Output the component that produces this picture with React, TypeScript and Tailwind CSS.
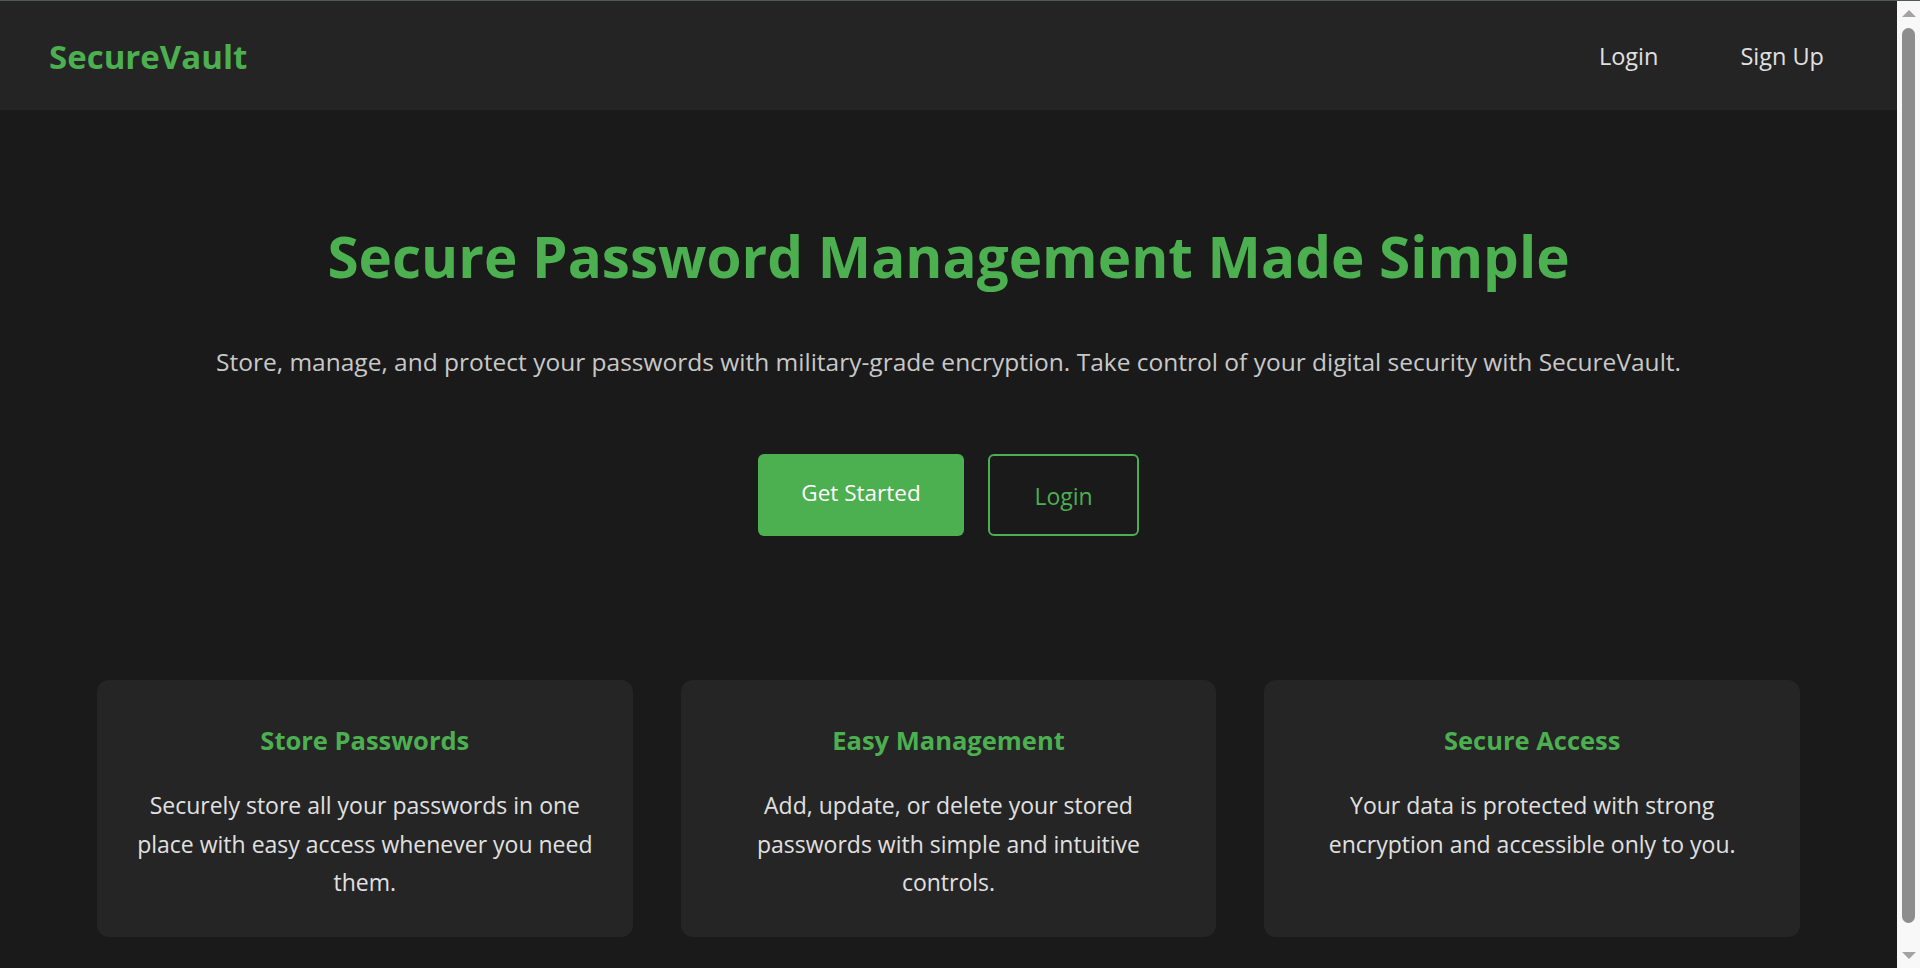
import React from "react";

const FEATURES = [
  {
    title: "Store Passwords",
    lines: ["Securely store all your passwords in one", "place with easy access whenever you need", "them."],
  },
  {
    title: "Easy Management",
    lines: ["Add, update, or delete your stored", "passwords with simple and intuitive", "controls."],
  },
  {
    title: "Secure Access",
    lines: ["Your data is protected with strong", "encryption and accessible only to you."],
  },
];

function Scrollbar() {
  return (
    <div className="flex w-[23px] shrink-0 flex-col items-center bg-[#f8f8f8]">
      <div className="mt-[9px] h-0 w-0 border-x-[7px] border-b-[7px] border-x-transparent border-b-[#a3a3a3]" />
      <div className="mt-[11px] h-[895px] w-[13px] rounded-full bg-[#8d8d8d]" />
      <div className="mt-[29px] h-0 w-0 border-x-[7px] border-t-[7px] border-x-transparent border-t-[#a3a3a3]" />
    </div>
  );
}

export default function App() {
  return (
    <div
      className="flex h-[968px] w-full overflow-hidden border-t border-[#4f5a58] bg-[#1a1a1a]"
      style={{ fontFamily: '"Open Sans", "Noto Sans", sans-serif' }}
    >
      <div className="flex min-w-0 flex-1 flex-col">
        {/* Navbar */}
        <nav className="flex h-[109px] shrink-0 items-center justify-between bg-[#242424] pl-[49px] pr-[73px] pt-[2px]">
          <span className="text-[33px] font-bold leading-none text-[#4caf50]">SecureVault</span>
          <div className="flex items-center gap-[82px] text-[23.5px] text-[#e0e0e0]">
            <a href="#">Login</a>
            <a href="#">Sign Up</a>
          </div>
        </nav>

        {/* Hero */}
        <section className="flex flex-col items-center pt-[113px] text-center">
          <h1 className="text-[56.6px] font-bold leading-[1.2] text-[#4caf50]">
            Secure Password Management Made Simple
          </h1>
          <p className="mt-[53px] text-[24.5px] leading-[1.5] text-[#c8c8c8]">
            Store, manage, and protect your passwords with military-grade encryption. Take control of your digital
            security with SecureVault.
          </p>
          <div className="mt-[73px] flex gap-[24px]">
            <button className="flex h-[82px] w-[206px] items-center justify-center rounded-[6px] bg-[#4caf50] pb-[3px] text-[22.5px] text-white">
              Get Started
            </button>
            <button className="flex h-[82px] w-[151px] items-center justify-center rounded-[6px] border-2 border-[#4caf50] pt-[4px] text-[23px] text-[#4caf50]">
              Login
            </button>
          </div>
        </section>

        {/* Features */}
        <section className="mt-[144px] grid grid-cols-3 gap-[48px] px-[97px]">
          {FEATURES.map((f) => (
            <div key={f.title} className="h-[257px] rounded-[12px] bg-[#252525] px-[16px] pt-[45px] text-center">
              <h3 className="text-[25.5px] font-bold leading-[1.2] text-[#4caf50]">{f.title}</h3>
              <p className="mt-[31px] text-[23px] leading-[38.4px] text-[#e0e0e0]">
                {f.lines.map((l, i) => (
                  <span key={i} className="block whitespace-nowrap">
                    {l}
                  </span>
                ))}
              </p>
            </div>
          ))}
        </section>
      </div>
      <Scrollbar />
    </div>
  );
}
